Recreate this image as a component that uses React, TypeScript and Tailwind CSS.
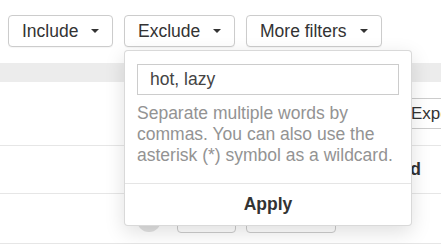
import React from "react";

function Caret() {
  return (
    <svg width="8" height="4" viewBox="0 0 8 4" className="shrink-0">
      <polygon points="0,0 8,0 4,4" fill="#333" />
    </svg>
  );
}

function DropButton({ label, w }: { label: string; w: string }) {
  return (
    <div
      className={`${w} h-8 flex items-center pl-[13px] pr-[13px] border border-[#ccc] rounded-[4px] bg-white text-[17.5px] text-[#333] shadow-[0_1px_1px_rgba(0,0,0,0.04)]`}
    >
      <span className="whitespace-nowrap">{label}</span>
      <span className="ml-auto">
        <Caret />
      </span>
    </div>
  );
}

export default function App() {
  return (
    <div className="relative w-[441px] h-[244px] overflow-hidden bg-white font-['Liberation_Sans',Arial,sans-serif]">
      <div className="flex gap-[11px] pl-2 pt-[15px]">
        <DropButton label="Include" w="w-[105px]" />
        <DropButton label="Exclude" w="w-[111px]" />
        <DropButton label="More filters" w="w-[136px]" />
      </div>
      <div className="mt-4 h-[19px] bg-[#ececec]" />
      <div className="h-[64px] border-b border-[#e6e6e6] flex pt-4 pl-[398px]">
        <div className="shrink-0 h-[31px] flex items-center px-3 border border-[#ccc] rounded-[4px] text-[17px] text-[#333] whitespace-nowrap">
          Export
        </div>
      </div>
      <div className="h-[48px] border-b border-[#e6e6e6] flex items-center justify-end pr-5">
        <span className="text-[17.5px] font-bold text-[#333] whitespace-nowrap">Updated</span>
      </div>
      <div className="h-[50px] border-b border-[#e6e6e6] flex items-center pl-[137px] pt-[2px]">
        <div className="w-6 h-6 rounded-full bg-[#e2e2e2]" />
        <div className="ml-4 w-[59px] h-[26px] border border-[#ccc] rounded-[4px]" />
        <div className="ml-[10px] w-[90px] h-[26px] border border-[#ccc] rounded-[4px]" />
      </div>

      <div className="absolute left-[124px] top-[50px] w-[288px] bg-white border border-[rgba(0,0,0,0.15)] rounded-[4px] shadow-[0_6px_20px_rgba(0,0,0,0.13)]">
        <div className="pt-[13px] px-3 pb-[17px]">
          <div className="h-[31px] border border-[#ccc] flex items-center pl-3 text-[17.5px] text-[#444]">
            hot, lazy
          </div>
          <p className="mt-2 text-[17.5px] leading-[21px] text-[#939393]">
            Separate multiple words by commas. You can also use the asterisk (*) symbol as a wildcard.
          </p>
        </div>
        <div className="border-t border-[#e5e5e5] h-[42px] flex items-center justify-center text-[17.5px] font-bold text-[#333]">
          Apply
        </div>
      </div>
    </div>
  );
}
